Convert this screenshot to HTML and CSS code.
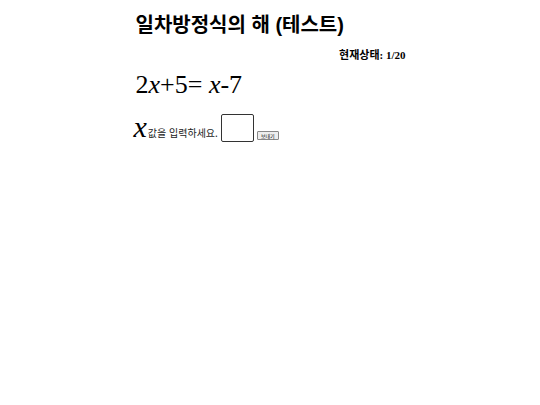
FILE: index.html
```html
<!DOCTYPE html>
<html lang="ko">
<head>
<meta charset="utf-8">
<link rel="stylesheet" href="styles.css">
</head>
<body>
<div class="page">
  <h1 class="title">일차방정식의 해 (테스트)</h1>
  <div class="status">현재상태: 1/20</div>
  <div class="equation">2<i>x</i>+5= <i>x</i>-7</div>
  <div class="answer">
    <i class="var">x</i><span class="prompt">값을 입력하세요.</span>
    <input class="box" type="text">
    <button class="send">보내기</button>
  </div>
</div>
</body>
</html>
```
FILE: styles.css
```css
html, body {
  margin: 0;
  padding: 0;
  background: #fff;
}
.page {
  width: 270px;
  margin: 0 auto;
  padding-left: 1px;
  font-family: "Liberation Serif", "Noto Sans CJK KR", serif;
  color: #000;
}
.title {
  margin: 0;
  padding-top: 13px;
  font-family: "Liberation Sans", "Noto Sans CJK KR", sans-serif;
  font-size: 20px;
  font-weight: bold;
  line-height: 24px;
}
.status {
  margin-top: 11px;
  text-align: right;
  font-size: 11px;
  font-weight: bold;
  line-height: 14px;
}
.status-k {
  font-size: 11.5px;
}
.equation {
  margin-top: 8px;
  font-size: 26px;
  line-height: 30px;
}
.answer {
  margin-top: 12px;
  display: flex;
  align-items: flex-end;
}
.var {
  font-size: 30px;
  line-height: 30px;
  margin-left: -2px;
  margin-right: 1px;
}
.prompt {
  font-family: "Noto Sans CJK KR", sans-serif;
  font-size: 10px;
  line-height: 14px;
  color: #222;
  margin-bottom: 2px;
}
.box {
  width: 29px;
  height: 24px;
  margin: 0 0 0 3px;
  padding: 1px;
  border: 1px solid #333;
  border-radius: 2px;
}
.send {
  margin: 0 0 2px 3px;
  padding: 0 2px;
  font-family: "Noto Sans CJK KR", sans-serif;
  font-size: 5px;
  line-height: 7px;
  height: 9px;
  width: 22px;
  border: 1px solid #888;
  border-radius: 1px;
  background: #eee;
  color: #000;
}
```
